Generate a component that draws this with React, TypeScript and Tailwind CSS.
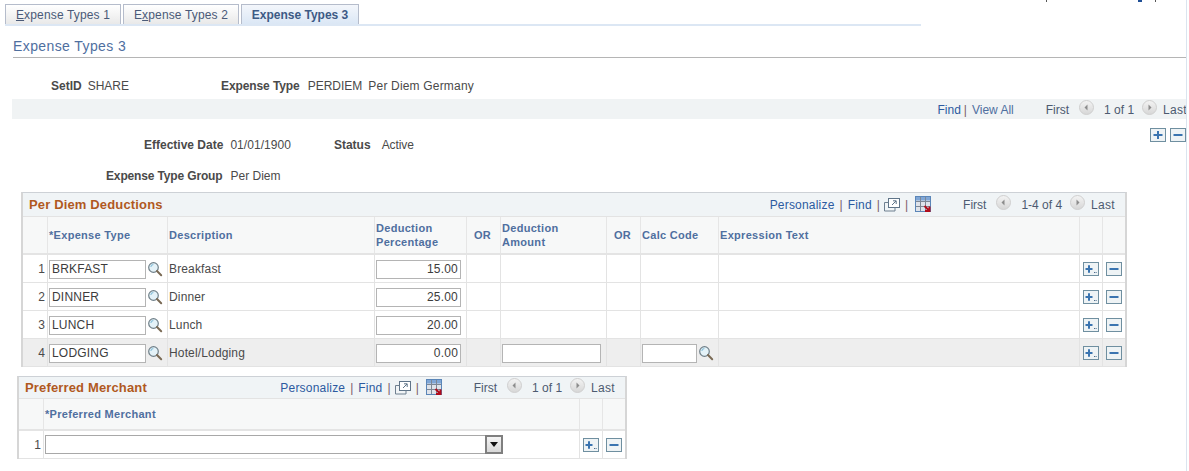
import React from "react";

const GRID1 = "grid grid-cols-[25px_120px_207px_92px_34px_106px_34px_78px_361px_23px_22px]";
const GRID2 = "grid grid-cols-[25px_536px_23px_22px]";

function Sep({ className = "mx-[5px]" }: { className?: string }) {
  return <span className={`text-[#7a5a6a] ${className}`}>|</span>;
}

function Lens() {
  return (
    <svg width="16" height="16" viewBox="0 0 16 16" className="shrink-0">
      <circle cx="6.5" cy="6.5" r="4.8" fill="#e4f2f8" stroke="#6f7f88" strokeWidth="1.2" />
      <path d="M3.8 6a3 3 0 0 1 2.6-2.6" fill="none" stroke="#8fc3dc" strokeWidth="1.2" />
      <path d="M10 10l4.2 4.2" stroke="#7a6a55" strokeWidth="2" strokeLinecap="round" />
    </svg>
  );
}

function Nav({ dir }: { dir: "l" | "r" }) {
  return (
    <svg width="15" height="15" viewBox="0 0 15 15" className="shrink-0">
      <defs>
        <linearGradient id="ng" x1="0" y1="0" x2="0" y2="1">
          <stop offset="0" stopColor="#f4f4f4" />
          <stop offset="1" stopColor="#d6d6d6" />
        </linearGradient>
      </defs>
      <circle cx="7.5" cy="7.5" r="7" fill="url(#ng)" stroke="#cfcfcf" />
      <path d={dir === "l" ? "M8.5 4.5v6L5.5 7.5z" : "M6.5 4.5v6l3-3z"} fill="#8c8c8c" />
    </svg>
  );
}

function AddBtn({ dots = false }: { dots?: boolean }) {
  return (
    <svg width="16" height="14" viewBox="0 0 16 14" className="shrink-0">
      <rect x="0.5" y="0.5" width="15" height="13" fill="#eef3f5" stroke="#6f8fa0" />
      <path d={dots ? "M2.5 7h7M6 3.2v7.6" : "M3.5 7h9M8 3v8"} stroke="#3a74b0" strokeWidth="2" fill="none" />
      {dots && <path d="M11 10.5h1M12.6 10.5h1" stroke="#4a6a8a" strokeWidth="1" />}
    </svg>
  );
}

function DelBtn() {
  return (
    <svg width="16" height="14" viewBox="0 0 16 14" className="shrink-0">
      <rect x="0.5" y="0.5" width="15" height="13" fill="#eef3f5" stroke="#6f8fa0" />
      <path d="M3.5 7h9" stroke="#3a74b0" strokeWidth="2" />
    </svg>
  );
}

function Popout() {
  return (
    <svg width="16" height="14" viewBox="0 0 16 14" className="shrink-0">
      <rect x="4.5" y="0.5" width="11" height="9" fill="#fff" stroke="#5f7488" />
      <path d="M0.5 4.5h4M0.5 4.5v8.5h10.5v-3.5" fill="none" stroke="#6f8090" />
      <path d="M8 7l4-4M9 2.8h3.2v3.2" fill="none" stroke="#5f7488" />
    </svg>
  );
}

function GridIcon() {
  return (
    <svg width="17" height="17" viewBox="0 0 17 17" className="shrink-0">
      <rect x="0.5" y="0.5" width="15" height="15" fill="#dfe3ea" stroke="#5b86b8" />
      <rect x="1" y="1" width="14" height="3.5" fill="#7fa6d6" />
      <path d="M5.5 1v14M10.5 1v14M1 5.5h14M1 10.5h14" stroke="#7d8794" />
      <path d="M9.5 10l4.5 4.5M14.5 10.5v4.5h-4.5" fill="none" stroke="#b00d1c" strokeWidth="2" />
    </svg>
  );
}

function Tab({ label, u, rest, active }: { label: string; u: string; rest: string; active?: boolean }) {
  return (
    <div
      className={`h-[20px] border border-b-0 border-[#b5bccb] flex items-center justify-center ${
        active
          ? "w-[118px] bg-gradient-to-b from-[#f3f6fb] to-[#dbe7f5] font-bold text-[#3d5a85]"
          : "w-[116px] bg-gradient-to-b from-[#ffffff] to-[#e9e9e9] text-[#4a5a78] tracking-[0.15px]"
      }`}
    >
      {label}
      {u && <span className="underline">{u}</span>}
      {rest}
    </div>
  );
}

function Th({ children, className = "" }: { children?: React.ReactNode; className?: string }) {
  return (
    <div className={`border-r border-[#e6e6e6] flex items-center pl-[1px] font-bold text-[11px] tracking-[0.3px] leading-[14px] text-[#4f6f9f] ${className}`}>
      {children}
    </div>
  );
}

function Td({ children, className = "" }: { children?: React.ReactNode; className?: string }) {
  return <div className={`border-r border-[#e3e3e3] flex items-center ${className}`}>{children}</div>;
}

function Field({ value, className = "", right }: { value?: string; className?: string; right?: boolean }) {
  return (
    <div
      className={`h-[19px] mt-[1px] border border-[#b4b4b4] bg-white leading-[17px] px-[2px] text-[#3c3c3c] tracking-[0.2px] ${
        right ? "text-right" : ""
      } ${className}`}
    >
      {value}
    </div>
  );
}

function Pager({ text, navUp = "mb-[4px]", className = "ml-[31px]" }: { text: string; navUp?: string; className?: string }) {
  return (
    <div className={`flex items-center text-[#4d5a70] ${className}`}>
      <span>First</span>
      <span className={`ml-[10px] ${navUp}`}><Nav dir="l" /></span>
      <span className="ml-[10px]">{text}</span>
      <span className={`ml-[8px] ${navUp}`}><Nav dir="r" /></span>
      <span className="ml-[6px] tracking-[0.3px]">Last</span>
    </div>
  );
}

const rows = [
  { n: "1", code: "BRKFAST", desc: "Breakfast", pct: "15.00" },
  { n: "2", code: "DINNER", desc: "Dinner", pct: "25.00" },
  { n: "3", code: "LUNCH", desc: "Lunch", pct: "20.00" },
  { n: "4", code: "LODGING", desc: "Hotel/Lodging", pct: "0.00", last: true },
];

export default function App() {
  return (
    <div className="relative w-[1189px] h-[471px] overflow-hidden bg-white font-['Liberation_Sans',Arial,sans-serif] text-[12px] text-[#4a4a4a]">
      {/* clipped header remnants at the top edge */}
      <div className="absolute top-0 left-[1046px] w-[1px] h-[2px] bg-[#555]" />
      <div className="absolute top-0 left-[1138px] w-[4px] h-[2px] bg-[#1f4f96]" />
      <div className="absolute top-0 left-[1155px] w-[1px] h-[2px] bg-[#555]" />
      {/* right edge line */}
      <div className="absolute top-0 right-[2px] w-[1px] h-full bg-[#dbe4ef]" />

      <div className="pt-[4px] pl-[5px]">
        <div className="flex gap-[2px]">
          <Tab label="" u="E" rest="xpense Types 1" />
          <Tab label="E" u="x" rest="pense Types 2" />
          <Tab label="Expense Types 3" u="" rest="" active />
        </div>
        <div className="h-[2px] w-[916px] bg-[#dce7f4]" />
      </div>

      <div className="ml-[13px] mr-[3px] mt-[11px] h-[21px] border-b border-[#b5b5b5] text-[14px] tracking-[0.4px] leading-[18px] text-[#4f6f9f]">
        Expense Types 3
      </div>

      <div className="flex h-[20px] mt-[18px] items-center leading-[16px]">
        <span className="ml-[51px] font-bold">SetID</span>
        <span className="ml-[6px]">SHARE</span>
        <span className="ml-[92px] font-bold tracking-[-0.1px]">Expense Type</span>
        <span className="ml-[8px]">PERDIEM</span>
        <span className="ml-[6px] tracking-[0.18px]">Per Diem Germany</span>
      </div>

      <div className="ml-[12px] mr-[3px] mt-[3px] h-[20px] pt-[2px] bg-[#f0f3f4] flex items-center justify-end overflow-hidden">
        <div className="flex items-center whitespace-nowrap -mr-[1px]">
          <span className="text-[#2c5aa0]">Find</span>
          <Sep className="ml-[3px] mr-[5px]" />
          <span className="text-[#4f6f9f]">View All</span>
          <Pager text="1 of 1" navUp="mb-[6px]" className="ml-[32px]" />
        </div>
      </div>

      <div className="flex justify-between mr-[3px] mt-[9px]">
        <div className="flex items-center h-[16px] mt-[9px]">
          <span className="ml-[144px] font-bold">Effective Date</span>
          <span className="ml-[7px] tracking-[0.05px]">01/01/1900</span>
          <span className="ml-[43px] font-bold mb-[1px]">Status</span>
          <span className="ml-[11px] tracking-[-0.1px]">Active</span>
        </div>
        <div className="flex gap-[4px] h-[14px]">
          <AddBtn />
          <DelBtn />
        </div>
      </div>

      <div className="flex items-center h-[16px] mt-[15px]">
        <span className="ml-[106px] font-bold tracking-[-0.15px]">Expense Type Group</span>
        <span className="ml-[8px]">Per Diem</span>
      </div>

      {/* Per Diem Deductions */}
      <div className="ml-[21px] mt-[8px] w-[1106px] border border-[#cdd1d6] border-b-0 border-l-2 border-r-2 border-r-[#d6d6d6] border-l-[#d6d6d6]">
        <div className="h-[24px] bg-[#f0f4f6] flex items-center justify-between border-b border-[#e3e3e3] pl-[6px]">
          <span className="font-bold text-[13px] tracking-[0.15px] text-[#b0591f]">Per Diem Deductions</span>
          <div className="flex items-center mr-[10px]">
            <span className="text-[#2c5aa0] tracking-[0.2px]">Personalize</span>
            <Sep />
            <span className="text-[#2c5aa0] tracking-[0.2px]">Find</span>
            <Sep className="ml-[5px] mr-[4px]" />
            <Popout />
            <Sep />
            <span className="ml-[2px]"><GridIcon /></span>
            <Pager text="1-4 of 4" />
          </div>
        </div>
        <div className={`${GRID1} h-[38px] bg-[#f7f8f8] border-b-2 border-[#e4e4e4]`}>
          <Th />
          <Th>*Expense Type</Th>
          <Th>Description</Th>
          <Th>Deduction<br />Percentage</Th>
          <Th className="pl-[7px]">OR</Th>
          <Th>Deduction<br />Amount</Th>
          <Th className="pl-[7px]">OR</Th>
          <Th>Calc Code</Th>
          <Th>Expression Text</Th>
          <Th />
          <Th className="border-r-0" />
        </div>
        {rows.map((r) => (
          <div key={r.n} className={`${GRID1} h-[28px] border-b border-[#e3e3e3] ${r.last ? "bg-[#eeeeee]" : "bg-white"}`}>
            <Td className="justify-end pr-[2px]">{r.n}</Td>
            <Td className="pl-[1px]">
              <Field value={r.code} className="w-[97px]" />
              <span className="ml-[1px]"><Lens /></span>
            </Td>
            <Td className="pl-[1px] tracking-[0.15px]">{r.desc}</Td>
            <Td className="pl-[1px]"><Field value={r.pct} right className="w-[85px]" /></Td>
            <Td />
            <Td className="pl-[1px]">{r.last && <Field className="w-[99px]" />}</Td>
            <Td />
            <Td className="pl-[1px]">
              {r.last && (
                <>
                  <Field className="w-[55px]" />
                  <span className="ml-[1px]"><Lens /></span>
                </>
              )}
            </Td>
            <Td />
            <Td className="justify-center"><AddBtn dots /></Td>
            <Td className="justify-center border-r-0"><DelBtn /></Td>
          </div>
        ))}
      </div>

      {/* Preferred Merchant */}
      <div className="ml-[17px] mt-[9px] w-[610px] border border-[#cdd1d6] border-b-0 border-l-2 border-r-2 border-r-[#d6d6d6] border-l-[#d6d6d6]">
        <div className="h-[22px] bg-[#f0f4f6] flex items-center justify-between border-b border-[#e3e3e3] pl-[6px]">
          <span className="font-bold text-[13px] tracking-[0.15px] text-[#b0591f]">Preferred Merchant</span>
          <div className="flex items-center mr-[10px]">
            <span className="text-[#2c5aa0] tracking-[0.2px]">Personalize</span>
            <Sep />
            <span className="text-[#2c5aa0] tracking-[0.2px]">Find</span>
            <Sep className="ml-[5px] mr-[4px]" />
            <Popout />
            <Sep />
            <span className="ml-[2px]"><GridIcon /></span>
            <Pager text="1 of 1" />
          </div>
        </div>
        <div className={`${GRID2} h-[32px] bg-[#f7f8f8] border-b-2 border-[#e4e4e4]`}>
          <Th />
          <Th>*Preferred Merchant</Th>
          <Th />
          <Th className="border-r-0" />
        </div>
        <div className={`${GRID2} h-[28px] border-b border-[#e3e3e3] bg-white`}>
          <Td className="justify-end pr-[2px]">1</Td>
          <Td className="pl-[1px]">
            <div className="w-[440px] h-[19px] border border-[#a8a8a8] border-r-0 bg-white" />
            <div className="w-[18px] h-[19px] border-2 border-[#7f7f7f] bg-gradient-to-b from-[#f4f4f4] to-[#d8d8d8] flex items-center justify-center">
              <svg width="8" height="5" viewBox="0 0 8 5"><path d="M0 0h8L4 5z" fill="#111" /></svg>
            </div>
          </Td>
          <Td className="justify-center"><AddBtn dots /></Td>
          <Td className="justify-center border-r-0"><DelBtn /></Td>
        </div>
      </div>
    </div>
  );
}
